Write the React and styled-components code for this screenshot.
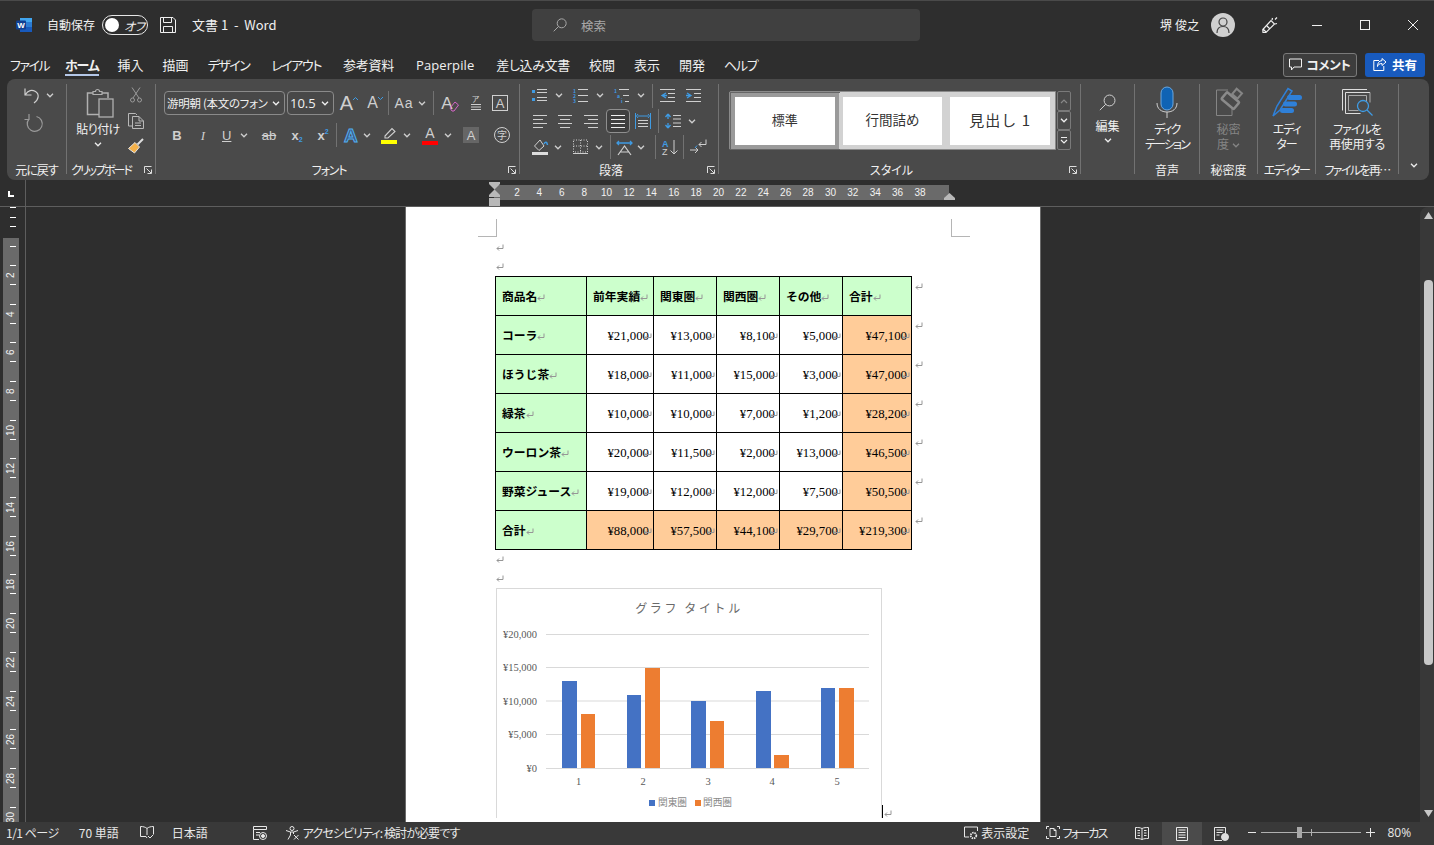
import React from 'react';
import styled, { createGlobalStyle } from 'styled-components';

const UI = '"Noto Sans CJK JP","Noto Sans",sans-serif';
const LAT = '"Open Sans","Noto Sans CJK JP",sans-serif';
const BLUE = '#3f9be3';

const Global = createGlobalStyle`
  html,body{margin:0;padding:0;background:#2e2e2e;overflow:hidden;}
  *{box-sizing:border-box;}
`;
const Shell = styled.div`
  width:1434px;height:845px;display:flex;flex-direction:column;background:#2e2e2e;color:#f0f0f0;
  font:12px/15px ${UI};font-feature-settings:"palt";overflow:hidden;
`;
const Glyph = styled.svg`display:block;flex:none;fill:none;stroke:currentColor;stroke-width:1;overflow:visible;`;
const S = ({ w, h, children, ...r }) => <Glyph width={w} height={h} viewBox={`0 0 ${w} ${h}`} {...r}>{children}</Glyph>;
const Chev = ({ color }) => <S w={8} h={5} style={color ? { color } : undefined}><polyline points="1,0.8 4,3.8 7,0.8" strokeWidth="1.3" /></S>;

/* title bar */
const TitleBar = styled.div`height:50px;border-top:1px solid #4a4a4a;padding-bottom:1px;display:flex;align-items:center;flex:none;`;
const TitleLeft = styled.div`width:532px;display:flex;align-items:center;padding-left:16px;`;
const AutoSave = styled.span`margin:-2px 0 0 15px;font-size:12px;`;
const Toggle = styled.div`
  margin-left:7px;width:46px;height:20px;border:1.5px solid #e6e6e6;border-radius:10px;display:flex;align-items:center;padding-left:2px;white-space:nowrap;
  &>i{width:14px;height:14px;border-radius:50%;background:#fff;flex:none;}
  &>span{margin-left:5px;font-size:12px;font-style:italic;letter-spacing:-.5px;}
`;
const SaveBtn = styled.div`margin-left:12px;`;
const DocName = styled.span`margin:-2px 0 0 16px;font:13px/15px ${UI};white-space:pre;`;
const Search = styled.div`
  width:388px;height:32px;background:#404040;border-radius:4px;display:flex;align-items:center;padding-left:21px;gap:14px;color:#a8a8a8;font-size:12.5px;
`;
const TitleRight = styled.div`flex:1;display:flex;align-items:center;padding-left:240px;`;
const UserName = styled.span`font-size:12px;letter-spacing:.2px;margin-top:-1px;`;
const Avatar = styled.div`margin-left:11px;width:24px;height:24px;border-radius:50%;background:#d0d0d0;color:#444;display:flex;align-items:center;justify-content:center;`;
const WinBtn = styled.div`margin-left:${p => p.$ml}px;color:#f0f0f0;`;

/* tabs */
const TabRow = styled.div`height:29px;display:flex;align-items:center;padding:0 9px 0 10px;flex:none;`;
const Tab = styled.span`
  margin-right:${p => p.$mr}px;font-size:13px;line-height:18px;white-space:nowrap;letter-spacing:${p => p.$ls || 0}px;
  font-family:${p => p.$lat ? LAT : UI};
  font-weight:${p => p.$active ? 700 : 400};
  box-shadow:${p => p.$active ? '0 2px 0 #b4c7e7' : 'none'};
`;
const Actions = styled.div`margin-left:auto;display:flex;gap:8px;`;
const CommentBtn = styled.div`width:74px;height:24px;background:#3d3d3d;border:1px solid #7a7a7a;border-radius:3px;display:flex;align-items:center;justify-content:center;gap:4px;font-size:12.5px;font-weight:700;letter-spacing:-.3px;`;
const ShareBtn = styled.div`width:60px;height:24px;background:#185abd;border-radius:3px;display:flex;align-items:center;justify-content:center;gap:5px;font-size:12.5px;font-weight:700;color:#fff;`;

/* ribbon */
const Ribbon = styled.div`height:101px;margin:0 5px 0 7px;background:#4a4a4a;border-radius:8px;display:flex;color:#cfcfcf;flex:none;`;
const Group = styled.div`
  width:${p => p.$w}px;height:90px;margin-top:5px;position:relative;display:flex;flex-direction:column;
  border-right:${p => p.$last ? 'none' : '1px solid #727272'};
`;
const Body = styled.div`flex:1;display:flex;flex-direction:column;min-height:0;padding:${p => p.$pad || '0'};`;
const GroupLabel = styled.div`
  height:14px;line-height:14px;margin-bottom:-3px;text-align:center;font-size:12px;color:#f0f0f0;white-space:nowrap;
  padding-right:${p => p.$pr || 0}px;letter-spacing:${p => p.$ls || 0}px;
`;
const Launcher = styled.div`position:absolute;right:3px;bottom:0;color:#ddd;`;
const Row = styled.div`display:flex;align-items:center;height:${p => p.$h}px;margin-bottom:${p => p.$mb || 0}px;`;
const Tool = styled.div`
  width:${p => p.$w}px;height:100%;display:flex;align-items:center;flex:none;
  justify-content:${p => p.$pl !== undefined ? 'flex-start' : 'center'};
  padding-left:${p => p.$pl || 0}px;gap:${p => p.$gap || 0}px;margin-left:${p => p.$ml || 0}px;
`;
const SelTool = styled(Tool)`border:1.5px solid #8f8f8f;border-radius:4px;background:#3f3f3f;`;
const Sep = styled.div`width:1px;height:24px;background:#727272;flex:none;margin:0 ${p => p.$mr || 0}px 0 ${p => p.$ml || 0}px;`;
const Combo = styled.div`
  width:${p => p.$w}px;height:24px;border:1px solid #8a8a8a;border-radius:4px;margin-right:${p => p.$mr || 0}px;background:#484848;display:flex;align-items:center;justify-content:space-between;
  padding:0 4px 0 2px;color:#f0f0f0;white-space:nowrap;flex:none;
`;
const ComboText = styled.span`font-size:${p => p.$s}px;letter-spacing:${p => p.$ls || 0}px;font-family:${p => p.$lat ? LAT : UI};`;
const Letter = styled.span`
  font-family:"Liberation Sans",sans-serif;font-size:${p => p.$s || 14}px;line-height:1;color:${p => p.$c || 'inherit'};font-weight:${p => p.$b ? 700 : 400};
  font-style:${p => p.$i ? 'italic' : 'normal'};text-decoration:${p => p.$d || 'none'};
`;
const Sub = styled.sub`font-size:7px;color:${BLUE};vertical-align:${p => p.$up ? '6px' : '-2px'};line-height:0;font-weight:700;`;
const Outlined = styled.span`font:700 19px/1 "Liberation Sans",sans-serif;color:#3d5a80;-webkit-text-stroke:1px #52aef0;`;
const Stack = styled.div`display:flex;flex-direction:column;align-items:center;width:16px;`;
const Bar = styled.i`display:block;width:16px;height:4px;background:${p => p.$c};margin-top:${p => p.$mt || 0}px;`;
const BoxA = styled.div`width:16px;height:16px;border:1px solid #d0d0d0;display:flex;align-items:center;justify-content:center;`;
const ShadeA = styled.div`width:16px;height:16px;background:#666;display:flex;align-items:center;justify-content:center;`;
const Circled = styled.div`width:16px;height:16px;border:1px solid #d0d0d0;border-radius:50%;display:flex;align-items:center;justify-content:center;font-size:10px;line-height:1;`;
const Ruby = styled.div`display:flex;flex-direction:column;align-items:center;font-size:8px;line-height:8px;`;

const Paste = styled.div`width:56px;margin-left:3px;display:flex;flex-direction:column;align-items:center;padding-top:4px;color:#f0f0f0;`;
const PasteLabel = styled.div`margin-top:3px;font-size:12px;line-height:16px;letter-spacing:-.6px;`;
const SmallCol = styled.div`display:flex;flex-direction:column;align-items:center;width:20px;gap:9px;padding-top:3px;`;
const Split = styled.div`display:flex;flex:1;`;

const Gallery = styled.div`display:flex;align-items:flex-start;`;
const StyleBox = styled.div`width:327px;height:59px;padding:1px;background:#d2d2d2;border:1px solid #8a8a8a;border-radius:2px 0 0 2px;display:flex;align-items:center;`;
const StyleItem = styled.div`
  width:108px;height:56px;background:#fff;border:4px solid ${p => p.$sel ? '#9a9a9a' : '#d2d2d2'};outline:${p => p.$sel ? '1px solid #666' : 'none'};
  display:flex;align-items:center;justify-content:center;font-size:${p => p.$s}px;letter-spacing:${p => p.$ls || 0}px;color:#333;font-feature-settings:normal;white-space:nowrap;padding-bottom:2px;
`;
const GalleryNav = styled.div`display:flex;flex-direction:column;margin-left:1px;`;
const GalleryBtn = styled.div`width:14px;height:${p => p.$h}px;border:1px solid #7a7a7a;border-radius:2px;display:flex;align-items:center;justify-content:center;color:${p => p.$dim ? '#888' : '#eee'};`;

const Big = styled.div`flex:1;display:flex;flex-direction:column;align-items:center;color:${p => p.$dim ? '#858585' : '#f0f0f0'};`;
const BigIcon = styled.div`height:${p => p.$h || 36}px;display:flex;align-items:center;justify-content:center;padding-top:${p => p.$pt || 0}px;`;
const BigText = styled.div`text-align:center;font-size:12px;line-height:15px;white-space:nowrap;margin-top:${p => p.$mt || 1}px;`;
const Ln = styled.span`display:block;letter-spacing:${p => p.$ls || 0}px;`;
const BigChev = styled.div`margin-top:${p => p.$mt || 5}px;display:flex;justify-content:center;`;
const DimChevInline = styled.span`display:inline-flex;margin-left:3px;vertical-align:middle;`;
const Collapse = styled.div`flex:1;display:flex;align-items:flex-end;justify-content:flex-start;padding:0 0 6px 11px;color:#eee;`;

/* ruler row */
const RulerRow = styled.div`height:27px;border-bottom:1px solid #5e5e5e;display:flex;flex:none;`;
const Corner = styled.div`width:26px;border-right:1px solid #5e5e5e;padding:11px 0 0 8px;`;
const CornerMark = styled.div`width:6px;height:6px;border-left:2px solid #fff;border-bottom:2px solid #fff;`;
const HArea = styled.div`flex:1;padding:5px 0 0 468px;`;
const HTrack = styled.div`position:relative;width:455px;height:15px;background:#6a6a6a;display:flex;align-items:center;padding-left:11.8px;`;
const HNum = styled.span`width:22.4px;flex:none;text-align:center;font:10px/15px "Liberation Sans",sans-serif;color:#f2f2f2;`;
const Marker = styled.div`position:absolute;left:${p => p.$l}px;top:${p => p.$t}px;color:#b8b8b8;`;

/* main */
const Main = styled.div`height:615px;display:flex;flex:none;`;
const VRuler = styled.div`width:26px;border-right:1px solid #5e5e5e;padding-left:3px;display:flex;flex-direction:column;`;
const VTop = styled.div`height:31px;width:16px;display:flex;flex-direction:column;align-items:flex-end;gap:8.7px;padding-right:3px;`;
const VTrack = styled.div`flex:1;width:16px;background:#6a6a6a;display:flex;flex-direction:column;align-items:center;overflow:hidden;`;
const VTick = styled.i`display:block;width:6px;height:1px;background:#fff;flex:none;margin:${p => p.$m || 0};align-self:flex-end;margin-right:${p => p.$flush ? 0 : 3}px;`;
const VCell = styled.div`height:38.7px;flex:none;width:100%;display:flex;flex-direction:column;align-items:center;justify-content:center;gap:3px;`;
const VNum = styled.span`writing-mode:vertical-rl;transform:rotate(180deg);font:10px/10px "Liberation Sans",sans-serif;height:12px;text-align:center;color:#f2f2f2;`;
const DocArea = styled.div`flex:1;padding-left:380px;overflow:hidden;`;
const Page = styled.div`width:634px;height:615px;background:#fff;box-shadow:0 0 0 1px #6a6a6a;overflow:hidden;color:#000;padding-top:12px;font-feature-settings:normal;`;
const CropRow = styled.div`width:492px;margin-left:72px;display:flex;justify-content:space-between;`;
const Crop = styled.div`
  width:19px;height:18px;border-bottom:1px solid #b5b5b5;
  ${p => p.$right ? 'border-left:1px solid #b5b5b5;' : 'border-right:1px solid #b5b5b5;'}
`;
const Para = styled.div`height:${p => p.$h}px;margin-left:90px;padding-top:${p => p.$pt || 0}px;display:flex;align-items:center;color:#969696;`;
const Table = styled.table`border-collapse:collapse;table-layout:fixed;width:424px;margin-left:89px;`;
const Td = styled.td`
  height:39px;border:1px solid #000;background:${p => p.$bg || '#fff'};text-align:${p => p.$num ? 'right' : 'left'};
  padding:${p => p.$num ? '1px 1px 0 0' : '0 0 0 6px'};
  font:${p => p.$num ? '12.8px/16px "Liberation Serif",serif' : `700 11.8px/16px ${UI}`};
  white-space:nowrap;overflow:hidden;
`;
const EndTd = styled.td`padding:6px 0 0 3px;border:0;vertical-align:top;color:#969696;`;
const Inline = styled.span`display:inline-flex;vertical-align:-1px;color:#969696;margin-left:${p => p.$ml || 0}px;`;
const ChartLine = styled.div`margin-left:90px;display:flex;align-items:flex-end;`;
const Chart = styled.div`width:386px;height:230px;border:1px solid #d9d9d9;border-bottom:0;flex:none;`;
const Caret = styled.i`display:block;width:1px;height:13px;background:#000;flex:none;`;
const EndMark = styled.div`color:#969696;margin:0 0 0 1px;`;
const ScrollBar = styled.div`width:14px;background:#383838;border-radius:8px 0 0 0;display:flex;flex-direction:column;align-items:flex-end;padding:5px 1px 4px 0;color:#c8c8c8;`;
const ArrowWrap = styled.div`width:9px;height:8px;flex:none;`;
const Thumb = styled.div`width:9px;height:385px;background:#c8c8c8;border-radius:4px;margin-top:60px;`;
const Spacer = styled.div`flex:1;`;

/* status bar */
const Status = styled.div`height:23px;background:#393939;display:flex;align-items:center;font-size:12px;color:#e8e8e8;flex:none;padding:0 0 2px 6px;`;
const SItem = styled.div`margin-left:${p => p.$ml || 0}px;display:flex;align-items:center;gap:${p => p.$gap || 0}px;white-space:nowrap;letter-spacing:${p => p.$ls || 0}px;`;
const ViewBtn = styled.div`width:${p => p.$w || 40}px;height:23px;margin-bottom:-2px;background:${p => p.$on ? '#4b4b4b' : 'transparent'};display:flex;align-items:center;justify-content:center;margin-left:${p => p.$ml || 0}px;`;
const Slider = styled.div`position:relative;width:100px;height:1px;background:#b0b0b0;margin-left:5px;`;
const SliderThumb = styled.i`position:absolute;left:36px;top:-5px;width:5px;height:11px;background:#a8a8a8;`;
const SliderMark = styled.i`position:absolute;left:50px;top:-3px;width:1px;height:7px;background:#b0b0b0;`;

/* icon drawings */
const WordLogo = () => (
  <S w={16} h={16}>
    <rect x="4" y="1" width="12" height="4" fill="#41a5ee" stroke="none" />
    <rect x="4" y="5" width="12" height="5" fill="#2b7cd3" stroke="none" />
    <rect x="4" y="10" width="12" height="5" fill="#185abd" stroke="none" />
    <rect x="0" y="3.5" width="10" height="9" rx="1" fill="#103f91" stroke="none" />
    <text x="5" y="11" fill="#fff" stroke="none" textAnchor="middle" fontFamily="Liberation Sans" fontWeight="700" fontSize="8">W</text>
  </S>
);
const SaveIcon = () => <S w={16} h={16}><path d="M.5.5h12.5l2.500 2.500v12.500H.5z M3.500.5v5h8v-5 M3.500 15.500v-6h9v6" /></S>;
const Lens = ({ size = 16, c }) => <S w={size} h={size} style={c ? { color: c } : undefined}><circle cx={size * .62} cy={size * .38} r={size * .32} /><path d={`M${size * .4} ${size * .6}L${size * .05} ${size * .95}`} /></S>;
const Lines = ({ w, rows, c, sw = 1 }) => <S w={w} h={16} style={c ? { color: c } : undefined} strokeWidth={sw}>{rows.map((r, i) => <line key={i} x1={r[0]} x2={r[1]} y1={r[2] + .5} y2={r[2] + .5} />)}</S>;
const Launch = () => <S w={8} h={8}><path d="M.5 7V.5H7.500 M2.500 2.500L7 7 M7.500 3.500V7.500H3.500" /></S>;
const Ret = ({ w = 8 }) => <Glyph width={w} height={8} viewBox={`${8 - w} 0 ${w} 8`}><path d="M7 .5V4.500H1 M3 2.500L1 4.500L3 6.500" /></Glyph>;

const groupsH = ['2', '4', '6', '8', '10', '12', '14', '16', '18', '20', '22', '24', '26', '28', '30', '32', '34', '36', '38'];
const groupsV = ['2', '4', '6', '8', '10', '12', '14', '16', '18', '20', '22', '24', '26', '28', '30'];
const G = '#ccffcc', O = '#ffcc99';
const rows = [
  ['コーラ', '¥21,000', '¥13,000', '¥8,100', '¥5,000', '¥47,100'],
  ['ほうじ茶', '¥18,000', '¥11,000', '¥15,000', '¥3,000', '¥47,000'],
  ['緑茶', '¥10,000', '¥10,000', '¥7,000', '¥1,200', '¥28,200'],
  ['ウーロン茶', '¥20,000', '¥11,500', '¥2,000', '¥13,000', '¥46,500'],
  ['野菜ジュース', '¥19,000', '¥12,000', '¥12,000', '¥7,500', '¥50,500'],
];
const total = ['合計', '¥88,000', '¥57,500', '¥44,100', '¥29,700', '¥219,300'];
const head = ['商品名', '前年実績', '関東圏', '関西圏', 'その他', '合計'];
const bars = [[562, 681, 15], [581, 714, 14], [627, 695, 14], [645, 668, 15], [691, 701, 15], [710, 721, 14], [756, 691, 15], [774, 755, 15], [821, 688, 14], [839, 688, 15]];
const gridY = [[634.5, '¥20,000'], [667.5, '¥15,000'], [701, '¥10,000'], [734.5, '¥5,000'], [768.5, '¥0']];
const cats = [[578.5, '1'], [643, '2'], [708, '3'], [772, '4'], [837, '5']];

const ChartSvg = () => (
  <svg width="384" height="229" viewBox="497 589 384 229" style={{ display: 'block' }}>
    <text x="689" y="613" textAnchor="middle" fontFamily="Noto Sans CJK JP" fontSize="12" letterSpacing="2.6" fill="#6a6a6a">グラフ タイトル</text>
    {gridY.map(([y, t]) => (
      <g key={t}>
        <line x1="546" x2="869" y1={y} y2={y} stroke="#d9d9d9" />
        <text x="537" y={y + 3.5} textAnchor="end" fontFamily="Liberation Serif" fontSize="10.5" fill="#595959">{t}</text>
      </g>
    ))}
    {bars.map(([x, y, w], i) => <rect key={i} x={x} y={y} width={w} height={768 - y} fill={i % 2 ? '#ed7d31' : '#4472c4'} />)}
    {cats.map(([x, t]) => <text key={t} x={x} y="785" textAnchor="middle" fontFamily="Liberation Serif" fontSize="10.5" fill="#595959">{t}</text>)}
    <rect x="649" y="800" width="6" height="6" fill="#4472c4" />
    <text x="658" y="806" fontFamily="Noto Sans CJK JP" fontSize="9.7" fill="#8a8a8a">関東圏</text>
    <rect x="695" y="800" width="6" height="6" fill="#ed7d31" />
    <text x="703" y="806" fontFamily="Noto Sans CJK JP" fontSize="9.7" fill="#8a8a8a">関西圏</text>
  </svg>
);

const tabs = [
  { t: 'ファイル', mr: 16, ls: -1.5 }, { t: 'ホーム', mr: 19, ls: -1.2, a: true }, { t: '挿入', mr: 19 }, { t: '描画', mr: 19 },
  { t: 'デザイン', mr: 22, ls: -1.5 }, { t: 'レイアウト', mr: 22, ls: -1.4 }, { t: '参考資料', mr: 22, ls: -.25 }, { t: 'Paperpile', mr: 22, lat: true, ls: .1 },
  { t: '差し込み文書', mr: 19, ls: -.35 }, { t: '校閲', mr: 19 }, { t: '表示', mr: 19 }, { t: '開発', mr: 19 }, { t: 'ヘルプ', mr: 0, ls: -1.3 },
];

export default function App() {
  return (
    <Shell>
      <Global />
      <TitleBar>
        <TitleLeft>
          <WordLogo />
          <AutoSave>自動保存</AutoSave>
          <Toggle><i /><span>オフ</span></Toggle>
          <SaveBtn><SaveIcon /></SaveBtn>
          <DocName>文書 1  -  Word</DocName>
        </TitleLeft>
        <Search><Lens size={14} /><span>検索</span></Search>
        <TitleRight>
          <UserName>堺 俊之</UserName>
          <Avatar><S w={14} h={16}><circle cx="7" cy="5" r="4" strokeWidth="1.2" /><path d="M1 16c0-4 2-6.500 6-6.500s6 2.500 6 6.500" strokeWidth="1.2" /></S></Avatar>
          <WinBtn $ml={27}><S w={16} h={16}><path d="M1 15.500L.8 12.500 9 3.500l3.500 3.500-8.500 8.500z M4 15L1.500 12.500 M5 9l3 3 M10 3l.5-2 M13 7l2-.5 M13 2.500L15 .5" strokeWidth="1.200" /></S></WinBtn>
          <WinBtn $ml={34}><S w={10} h={1}><line x1="0" x2="10" y1=".5" y2=".5" /></S></WinBtn>
          <WinBtn $ml={38}><S w={10} h={10}><rect x=".5" y=".5" width="9" height="9" /></S></WinBtn>
          <WinBtn $ml={38}><S w={10} h={10}><path d="M0 0L10 10M10 0L0 10" /></S></WinBtn>
        </TitleRight>
      </TitleBar>

      <TabRow>
        {tabs.map(x => <Tab key={x.t} $mr={x.mr} $ls={x.ls} $active={x.a} $lat={x.lat}>{x.t}</Tab>)}
        <Actions>
          <CommentBtn><S w={13} h={13}><path d="M.5 1h12v8H5L2.500 12V9H.5z" /></S>コメント</CommentBtn>
          <ShareBtn><S w={14} h={13}><path d="M9 .5l4 3.500-4 3.500V5.500C6.500 5.500 5 6.500 4.500 8.500 4.500 5 6 2.800 9 2.600z M6 2.500H.8v10h10V8" /></S>共有</ShareBtn>
        </Actions>
      </TabRow>

      <Ribbon>
        <Group $w={60}>
          <Body $pad="3px 0 0 17px">
            <Row $h={17} $mb={9}>
              <S w={17} h={17}><path d="M1 1.500V8h6.500 M1.500 7.500C4 3 8 2.500 11.500 4.500c4 2.500 3.500 8-1.500 11.500" strokeWidth="1.2" /></S>
              <Tool $w={8} $ml={5}><Chev /></Tool>
            </Row>
            <Row $h={17}>
              <S w={17} h={18} style={{ color: '#9a9a9a' }}><path d="M5 1v5.500H.5 M5 6A7.500 7.500 0 1 0 12.500 3.500" strokeWidth="1.2" /></S>
            </Row>
          </Body>
          <GroupLabel $ls={-1}>元に戻す</GroupLabel>
        </Group>

        <Group $w={89}>
          <Split>
            <Paste>
              <S w={28} h={30} style={{ color: '#b0b0b0', marginLeft: 3 }}>
                <path d="M13 26.500H1.500V5H7M16 5H22V10" strokeWidth="1.5" />
                <path d="M7 6.500V3.500H9.500a2 2 0 014 0H16V6.500z" strokeWidth="1.2" />
                <rect x="13" y="11" width="14" height="18" strokeWidth="1.3" />
              </S>
              <PasteLabel>貼り付け</PasteLabel>
              <BigChev $mt={5}><Chev color="#eee" /></BigChev>
            </Paste>
            <SmallCol>
              <S w={12} h={16} style={{ color: '#9a9a9a' }}><path d="M2 .5L9 11M10 .5L3 11" /><circle cx="2.500" cy="13" r="2" /><circle cx="9.500" cy="13" r="2" /></S>
              <S w={16} h={16} style={{ color: '#b8b8b8', marginTop: 1 }}><path d="M4 13H.5V.5H7.500L9 2" /><path d="M4.500 3.500H11L15.500 8V15.500H4.500z M11 3.500V8h4.500 M7 10h6M7 12.500h6" /></S>
              <S w={16} h={16}><path d="M15 1L9.500 6.500" stroke="#ddd" strokeWidth="2" /><path d="M7 4.500L11.500 9 6.500 15 .5 10.500z" fill="#f4b14a" stroke="#e3e3e3" /></S>
            </SmallCol>
          </Split>
          <GroupLabel $pr={20} $ls={-2}>クリップボード</GroupLabel>
          <Launcher><Launch /></Launcher>
        </Group>

        <Group $w={364}>
          <Body $pad="7px 0 0 8px">
            <Row $h={24} $mb={8}>
              <Combo $w={121} $mr={2}><ComboText $s={11.5} $ls={-.3}>游明朝 (本文のフォン</ComboText><Chev /></Combo>
              <Combo $w={47} $mr={2}><ComboText $s={13} $lat>10.5</ComboText><Chev /></Combo>
              <Tool $w={26}><Letter $s={20}>A</Letter><S w={5} h={14} style={{ color: BLUE }}><polyline points="0,4 2.500,1.500 5,4" /></S></Tool>
              <Tool $w={26}><Letter $s={16}>A</Letter><S w={5} h={14} style={{ color: BLUE }}><polyline points="0,1 2.500,3.500 5,1" /></S></Tool>
              <Sep />
              <Tool $w={42} $gap={4}><Letter $s={14} style={{ letterSpacing: 1 }}>Aa</Letter><Chev /></Tool>
              <Sep $ml={2} $mr={3} />
              <Tool $w={26}><Letter $s={17}>A</Letter><S w={10} h={12} style={{ marginLeft: -4, marginTop: 6, color: '#d765c8' }}><path d="M1 8L6 2l3.500 3-4.500 6H3z" /></S></Tool>
              <Tool $w={25}><Ruby><span>ア</span><S w={10} h={8}><path d="M0 1.500h10M0 4h10M0 6.500h10" /></S></Ruby></Tool>
              <Tool $w={24}><BoxA><Letter $s={13}>A</Letter></BoxA></Tool>
            </Row>
            <Row $h={24}>
              <Tool $w={26}><Letter $s={13} $b>B</Letter></Tool>
              <Tool $w={26}><Letter $s={13} $i style={{ fontFamily: 'Liberation Serif' }}>I</Letter></Tool>
              <Tool $w={38} $pl={6} $gap={9}><Letter $s={13} $d="underline">U</Letter><Chev /></Tool>
              <Tool $w={26} $ml={2}><Letter $s={13} $d="line-through">ab</Letter></Tool>
              <Tool $w={26} $ml={2}><Letter $s={13} $b>x<Sub>2</Sub></Letter></Tool>
              <Tool $w={26}><Letter $s={13} $b>x<Sub $up>2</Sub></Letter></Tool>
              <Sep $mr={4} />
              <Tool $w={40} $pl={3} $gap={5}><Outlined>A</Outlined><Chev /></Tool>
              <Tool $w={41} $pl={0} $gap={6}><Stack><S w={14} h={13}><path d="M3 9L10 1.500l3 3L6 11H3z" strokeWidth="1.100" /></S><Bar $c="#ffff00" /></Stack><Chev /></Tool>
              <Tool $w={41} $pl={0} $gap={6}><Stack><Letter $s={14}>A</Letter><Bar $c="#ff0000" $mt={1} /></Stack><Chev /></Tool>
              <Tool $w={26} $pl={0}><ShadeA><Letter $s={13}>A</Letter></ShadeA></Tool>
              <Tool $w={26}><Circled>字</Circled></Tool>
            </Row>
          </Body>
          <GroupLabel $pr={17} $ls={-1.2}>フォント</GroupLabel>
          <Launcher><Launch /></Launcher>
        </Group>

        <Group $w={199}>
          <Body $pad="0 0 0 8px">
            <Row $h={23} $mb={2}>
              <Tool $w={41} $pl={4} $gap={8}><S w={15} h={14}><rect y="1" width="3" height="3" fill={BLUE} stroke="none" /><rect y="9" width="3" height="3" fill={BLUE} stroke="none" /><path d="M5 .5h10M5 3.500h10M5 8.500h10M5 11.500h10" /></S><Chev /></Tool>
              <Tool $w={41} $pl={4} $gap={8}><S w={15} h={15}><text x="0" y="5" fontSize="5" fontWeight="700" fill={BLUE} stroke="none">1</text><text x="0" y="10" fontSize="5" fontWeight="700" fill={BLUE} stroke="none">2</text><text x="0" y="15" fontSize="5" fontWeight="700" fill={BLUE} stroke="none">3</text><path d="M5 1.500h10M5 7.500h10M5 13.500h10" /></S><Chev /></Tool>
              <Tool $w={41} $pl={4} $gap={8}><S w={15} h={15}><text x="0" y="5" fontSize="5" fontWeight="700" fill={BLUE} stroke="none">1</text><text x="3" y="10" fontSize="5" fontWeight="700" fill={BLUE} stroke="none">a</text><text x="7" y="15" fontSize="5" fontWeight="700" fill={BLUE} stroke="none">i</text><path d="M5 1.500h10M9 7.500h6M11 13.500h4" /></S><Chev /></Tool>
              <Sep $ml={1} $mr={1} />
              <Tool $w={26}><S w={15} h={14}><path d="M0 .5h15M8 4.500h7M8 8.500h7M0 12.500h15" /><path d="M6 4L2 6.500l4 2.500M2 6.500h5" stroke={BLUE} strokeWidth="1.300" /></S></Tool>
              <Tool $w={26}><S w={15} h={14}><path d="M0 .5h15M8 4.500h7M8 8.500h7M0 12.500h15" /><path d="M1 4l4 2.500L1 9M5 6.500H0" stroke={BLUE} strokeWidth="1.300" /></S></Tool>
            </Row>
            <Row $h={24} $mb={2}>
              <Tool $w={24}><Lines w={14} rows={[[0, 14, 2], [0, 10, 6], [0, 14, 10], [0, 10, 14]]} /></Tool>
              <Tool $w={26}><Lines w={14} rows={[[0, 14, 2], [2, 12, 6], [0, 14, 10], [2, 12, 14]]} /></Tool>
              <Tool $w={26}><Lines w={14} rows={[[0, 14, 2], [4, 14, 6], [0, 14, 10], [4, 14, 14]]} /></Tool>
              <SelTool $w={24} $ml={2}><Lines w={14} rows={[[0, 14, 2], [0, 14, 6], [0, 14, 10], [0, 14, 14]]} c="#eee" /></SelTool>
              <Tool $w={22} $ml={2}><S w={16} h={16}><path d="M.5 0v16M15.500 0v16M3 3h10M3 1l-1.500 2L3 5M13 1l1.500 2L13 5" stroke={BLUE} /><path d="M3 7.500h10M3 10.500h10M3 13.500h10" /></S></Tool>
              <Sep $ml={4} $mr={2} />
              <Tool $w={36} $pl={4} $gap={7}><S w={16} h={16}><path d="M3 1L.5 4M3 1l2.500 3M3 1v5M3 15L.5 12M3 15l2.500-3M3 15v-5" stroke={BLUE} strokeWidth="1.300" /><path d="M8 2.500h8M8 6h8M8 10h8M8 13.500h8" /></S><Chev /></Tool>
            </Row>
            <Row $h={24}>
              <Tool $w={41} $pl={4} $gap={6}><S w={16} h={16}><path d="M8 1L2.500 7l4.500 4.500L12 7z" /><path d="M12 5c1.500-3 3-2 3.500 1" stroke={BLUE} strokeWidth="1.500" /><rect y="13" width="16" height="3" fill="#ddd" stroke="none" /></S><Chev /></Tool>
              <Tool $w={41} $pl={4} $gap={7}><S w={15} h={16}><path d="M.5 1h14v12H.5zM7.500 1v12M.5 7h14" strokeDasharray="1 1.500" /><path d="M0 14.500h15" /></S><Chev /></Tool>
              <Sep />
              <Tool $w={39} $pl={5} $gap={4}><S w={17} h={15}><path d="M1 3h15M3 1L1 3l2 2M14 1l2 2-2 2" stroke={BLUE} strokeWidth="1.300" /><path d="M2 15L8.500 6 15 15M4.500 12h8" strokeWidth="1.200" /></S><Chev /></Tool>
              <Sep $ml={5} />
              <Tool $w={27}><S w={16} h={16}><text x="0" y="7.500" fontSize="9" fontWeight="700" fill={BLUE} stroke="none" fontFamily="Liberation Sans">A</text><text x="0" y="16" fontSize="9" fill="#d0d0d0" stroke="none" fontFamily="Liberation Sans">Z</text><path d="M12 1v14M8.500 11.500L12 15l3.500-3.500" /></S></Tool>
              <Sep />
              <Tool $w={28}><S w={17} h={16}><path d="M16 .5v5H9M11.500 3L9 5.500 11.500 8" /><path d="M0 11h8M5 8l3 3-3 3" stroke="#ccc" /><path d="M7 6.500L5 9" stroke={BLUE} /></S></Tool>
            </Row>
          </Body>
          <GroupLabel $pr={16}>段落</GroupLabel>
          <Launcher><Launch /></Launcher>
        </Group>

        <Group $w={362}>
          <Body $pad="7px 0 0 10px">
            <Gallery>
              <StyleBox>
                <StyleItem $sel $s={13}>標準</StyleItem>
                <StyleItem $s={13.5}>行間詰め</StyleItem>
                <StyleItem $s={15} $ls={1}>見出し 1</StyleItem>
              </StyleBox>
              <GalleryNav>
                <GalleryBtn $h={20} $dim><S w={8} h={5}><polyline points="1,4 4,1 7,4" strokeWidth="1.200" /></S></GalleryBtn>
                <GalleryBtn $h={19}><Chev /></GalleryBtn>
                <GalleryBtn $h={20}><S w={8} h={7}><path d="M1 .5h6M1 3l3 3 3-3" strokeWidth="1.200" /></S></GalleryBtn>
              </GalleryNav>
            </Gallery>
          </Body>
          <GroupLabel $pr={16}>スタイル</GroupLabel>
          <Launcher><Launch /></Launcher>
        </Group>

        <Group $w={54}>
          <Big>
            <BigIcon $h={30} $pt={6}><Lens size={17} c="#d0d0d0" /></BigIcon>
            <BigText $mt={4}>編集</BigText>
            <BigChev><Chev color="#eee" /></BigChev>
          </Big>
        </Group>

        <Group $w={65}>
          <Big>
            <BigIcon>
              <S w={22} h={32}>
                <rect x="5" y="1" width="12" height="23" rx="6" fill="#0f63b4" stroke="#6aa7df" />
                <path d="M1 17c0 6 4.500 9 10 9s10-3 10-9M11 26v6" stroke="#cfcfcf" />
              </S>
            </BigIcon>
            <BigText><Ln $ls={-1.6}>ディク</Ln><Ln $ls={-1.8}>テーション</Ln></BigText>
          </Big>
          <GroupLabel>音声</GroupLabel>
        </Group>

        <Group $w={58}>
          <Big $dim>
            <BigIcon>
              <S w={28} h={30}>
                <path d="M17 28.500H1.500V3H13M17 22v6.500" />
                <g transform="rotate(40 15 14)" stroke="#8a8a8a"><rect x="7" y="9" width="16" height="9" rx="1" strokeWidth="2.500" /></g>
                <rect x="19" y="3" width="7" height="7" transform="rotate(40 22 6)" strokeWidth="2" />
              </S>
            </BigIcon>
            <BigText><Ln>秘密</Ln><Ln>度<DimChevInline><Chev color="#858585" /></DimChevInline></Ln></BigText>
          </Big>
          <GroupLabel>秘密度</GroupLabel>
        </Group>

        <Group $w={58}>
          <Big>
            <BigIcon>
              <S w={30} h={30} style={{ color: '#2f80d8' }}>
                <path d="M1 29l4-10L16 1.500l4 2.500L8 23z M1 29l7-6" strokeWidth="1.500" />
                <rect x="15" y="8" width="15" height="5" rx="2.500" fill="#2f80d8" stroke="none" />
                <rect x="11" y="14.500" width="14" height="5" rx="2.500" fill="#2f80d8" stroke="none" />
                <rect x="8" y="21" width="14" height="5" rx="2.500" fill="#2f80d8" stroke="none" />
              </S>
            </BigIcon>
            <BigText><Ln $ls={-1.2}>エディ</Ln><Ln $ls={-1}>ター</Ln></BigText>
          </Big>
          <GroupLabel $ls={-1.6}>エディター</GroupLabel>
        </Group>

        <Group $w={83}>
          <Big>
            <BigIcon>
              <S w={31} h={27}>
                <path d="M25 .5H.5v21" stroke="#ddd" />
                <path d="M28 3.500H3.500v21h15" stroke="#ddd" />
                <path d="M28 3.500v10M6.500 6.500h18v6M6.500 6.500v15h10" stroke="#aaa" />
                <circle cx="21" cy="17" r="5.500" stroke={BLUE} strokeWidth="1.300" />
                <path d="M25 21l5.500 5.500" stroke={BLUE} strokeWidth="1.300" />
              </S>
            </BigIcon>
            <BigText><Ln $ls={-1}>ファイルを</Ln><Ln $ls={-.4}>再使用する</Ln></BigText>
          </Big>
          <GroupLabel $ls={-1.6}>ファイルを再…</GroupLabel>
        </Group>

        <Group $w={30} $last>
          <Collapse><Chev /></Collapse>
        </Group>
      </Ribbon>

      <RulerRow>
        <Corner><CornerMark /></Corner>
        <HArea>
          <HTrack>
            {groupsH.map(n => <HNum key={n}>{n}</HNum>)}
            <Marker $l={-5} $t={-3}>
              <S w={11} h={24}><path d="M0 0h11v2L5.500 7.500 0 2z" fill="currentColor" stroke="none" /><path d="M5.500 7.500L11 13v2H0v-2z" fill="currentColor" stroke="none" /><rect y="16" width="11" height="8" fill="currentColor" stroke="none" /></S>
            </Marker>
            <Marker $l={450} $t={8}>
              <S w={11} h={7}><path d="M5.500 0L11 5v2H0V5z" fill="currentColor" stroke="none" /></S>
            </Marker>
          </HTrack>
        </HArea>
      </RulerRow>

      <Main>
        <VRuler>
          <VTop><VTick $flush /><VTick $flush /><VTick $flush /></VTop>
          <VTrack>
            <VTick $m="8px 3px 8.650px 0" />
            {groupsV.map(n => <VCell key={n}><VTick /><VNum>{n}</VNum><VTick /></VCell>)}
          </VTrack>
        </VRuler>
        <DocArea>
          <Page>
            <CropRow><Crop /><Crop $right /></CropRow>
            <Para $h={19.5} $pt={2}><Ret /></Para>
            <Para $h={19.5} $pt={1}><Ret /></Para>
            <Table>
              <colgroup>
                <col style={{ width: 91 }} /><col style={{ width: 67 }} /><col style={{ width: 63 }} /><col style={{ width: 63 }} /><col style={{ width: 63 }} /><col style={{ width: 69 }} /><col />
              </colgroup>
              <tbody>
                <tr>
                  {head.map(h => <Td key={h} $bg={G}>{h}<Inline><Ret /></Inline></Td>)}
                  <EndTd><Ret /></EndTd>
                </tr>
                {rows.map(r => (
                  <tr key={r[0]}>
                    <Td $bg={G}>{r[0]}<Inline><Ret /></Inline></Td>
                    {r.slice(1, 5).map((v, i) => <Td key={i} $num>{v}<Inline><Ret w={3} /></Inline></Td>)}
                    <Td $num $bg={O}>{r[5]}<Inline><Ret w={3} /></Inline></Td>
                    <EndTd><Ret /></EndTd>
                  </tr>
                ))}
                <tr>
                  <Td $bg={G}>{total[0]}<Inline><Ret /></Inline></Td>
                  {total.slice(1).map((v, i) => <Td key={i} $num $bg={O}>{v}<Inline><Ret w={3} /></Inline></Td>)}
                  <EndTd><Ret /></EndTd>
                </tr>
              </tbody>
            </Table>
            <Para $h={19} $pt={1}><Ret /></Para>
            <Para $h={19} $pt={1}><Ret /></Para>
            <ChartLine>
              <Chart><ChartSvg /></Chart>
              <Caret />
              <EndMark><Ret /></EndMark>
            </ChartLine>
          </Page>
        </DocArea>
        <ScrollBar>
          <ArrowWrap><S w={9} h={7}><path d="M4.500 0L9 7H0z" fill="currentColor" stroke="none" /></S></ArrowWrap>
          <Thumb />
          <Spacer />
          <ArrowWrap><S w={9} h={7}><path d="M0 0h9L4.500 7z" fill="currentColor" stroke="none" /></S></ArrowWrap>
        </ScrollBar>
      </Main>

      <Status>
        <SItem $ls={-.5}>1/1 ページ</SItem>
        <SItem $ml={20}>70 単語</SItem>
        <SItem $ml={21}><S w={14} h={13}><path d="M7 2.500C5.500 1 3 .5.500.5v10H6L7 12M7 2.500C8.500 1 11 .5 13.500.5V8M7 2.500V9M8 10l2 2 3.500-3.500" /></S></SItem>
        <SItem $ml={18}>日本語</SItem>
        <SItem $ml={45}><S w={14} h={14}><path d="M.5 .5h13v3H.5zM.5 3.500v10H6M3 6.500h4M3 9h3" /><circle cx="10" cy="10" r="3.500" /><circle cx="10" cy="10" r="1.500" fill="currentColor" /></S></SItem>
        <SItem $ml={18} $gap={4} $ls={-.9}><S w={14} h={14}><circle cx="7" cy="2.500" r="2" /><path d="M1 4.500l4.500 1.500h3L13 4.500M5.500 6v3L3 13.500M8.500 6v2" /><path d="M9 9l4.500 4.500M13.500 9L9 13.500" /></S>アクセシビリティ: 検討が必要です</SItem>
        <SItem $ml={505}><S w={14} h={13}><path d="M5 11H.5V1h13v4" /><circle cx="9.500" cy="9.500" r="2.800" strokeDasharray="1.500 .8" strokeWidth="1.800" /></S></SItem>
        <SItem $ml={3}>表示設定</SItem>
        <SItem $ml={17}><S w={14} h={13}><path d="M3 .5H.5V3M11 .5h2.500V3M3 12.500H.5V10M11 12.500h2.500V10" /><path d="M4 2.500h4l2 2v6H4zM8 2.500v2h2" /></S></SItem>
        <SItem $ml={2} $ls={-1.8}>フォーカス</SItem>
        <ViewBtn $ml={15} $w={40}><S w={14} h={13}><path d="M7 1.500C5 .5 3 .5.500.5v11c2.500 0 4.500 0 6.500 1 2-1 4-1 6.500-1V.5C11 .5 9 .5 7 1.500zM7 1.500v11M2.500 3.500h2.500M2.500 6h2.500M2.500 8.500h2.500M9 3.500h2.500M9 6h2.500M9 8.500h2.500" /></S></ViewBtn>
        <ViewBtn $on $w={40}><S w={12} h={14}><path d="M.5 .5h11v13H.5zM2.500 3h7M2.500 5.500h7M2.500 8h7M2.500 10.500h7" /></S></ViewBtn>
        <ViewBtn $w={40}><S w={15} h={14}><path d="M8 13.500H.5V.5h11v6M2.500 3h7M2.500 5.500h6M2.500 8h3" /><circle cx="11" cy="10" r="3.500" fill="#ddd" stroke="#ddd" /></S></ViewBtn>
        <SItem $ml={6}><S w={8} h={1}><line x1="0" x2="8" y1=".5" y2=".5" /></S></SItem>
        <Slider><SliderThumb /><SliderMark /></Slider>
        <SItem $ml={5}><S w={9} h={9}><path d="M0 4.500h9M4.500 0v9" /></S></SItem>
        <SItem $ml={13} style={{ fontFamily: LAT }}>80%</SItem>
      </Status>
    </Shell>
  );
}
